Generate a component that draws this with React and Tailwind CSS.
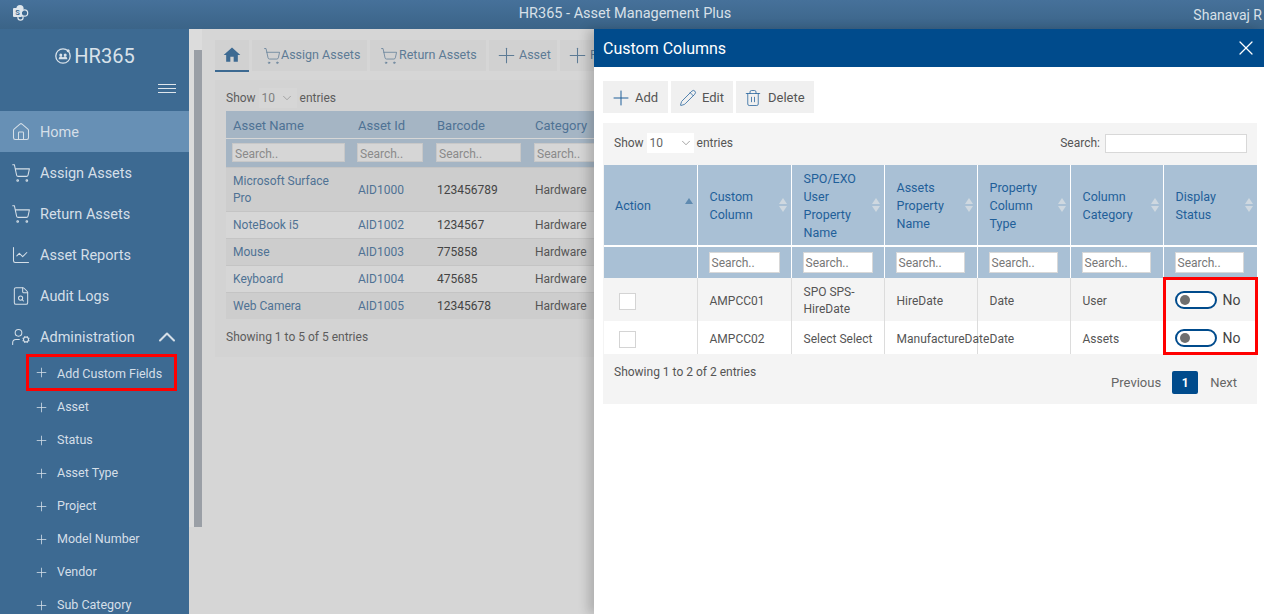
import React from 'react';
import { Home, ShoppingCart, ChartLine, FileSearch, UserCog, ChevronUp, ChevronDown, Plus, Pencil, Trash2, X } from 'lucide-react';
import { MdHome } from 'react-icons/md';

const mainMenu = [
  { label: 'Home', Icon: Home, active: true },
  { label: 'Assign Assets', Icon: ShoppingCart },
  { label: 'Return Assets', Icon: ShoppingCart },
  { label: 'Asset Reports', Icon: ChartLine },
  { label: 'Audit Logs', Icon: FileSearch },
];

const subMenu = ['Asset', 'Status', 'Asset Type', 'Project', 'Model Number', 'Vendor', 'Sub Category'];

const assets = [
  { name: 'Microsoft Surface Pro', id: 'AID1000', barcode: '123456789', h: 'h-[44px]' },
  { name: 'NoteBook i5', id: 'AID1002', barcode: '1234567', h: 'h-[27px]' },
  { name: 'Mouse', id: 'AID1003', barcode: '775858', h: 'h-[27px]' },
  { name: 'Keyboard', id: 'AID1004', barcode: '475685', h: 'h-[27px]' },
  { name: 'Web Camera', id: 'AID1005', barcode: '12345678', h: 'h-[27px]' },
];

const columns = [
  ['Custom', 'Column'],
  ['SPO/EXO', 'User', 'Property', 'Name'],
  ['Assets', 'Property', 'Name'],
  ['Property', 'Column', 'Type'],
  ['Column', 'Category'],
  ['Display', 'Status'],
];

const rows = [
  { code: 'AMPCC01', spo: ['SPO SPS-', 'HireDate'], prop: 'HireDate', type: 'Date', cat: 'User', bg: 'bg-[#f4f4f4]', h: 'h-[43px]' },
  { code: 'AMPCC02', spo: ['Select Select'], prop: 'ManufactureDate', type: 'Date', cat: 'Assets', bg: 'bg-white', h: 'h-[33px]' },
];

function SharePointLogo() {
  return (
    <svg width="17" height="17" viewBox="0 0 17 17" className="text-[#dfe6ec]">
      <circle cx="8" cy="4.5" r="3.6" fill="currentColor" />
      <circle cx="12.5" cy="9" r="3.2" fill="none" stroke="currentColor" strokeWidth="1.2" />
      <circle cx="8.5" cy="13.5" r="2.6" fill="none" stroke="currentColor" strokeWidth="1.2" />
      <rect x="1" y="4" width="9" height="9" rx="1" fill="currentColor" />
      <text x="5.5" y="11.4" fontSize="7.5" fontWeight="700" textAnchor="middle" fill="#3d6a92">S</text>
    </svg>
  );
}

function BrandMark() {
  return (
    <svg width="18" height="18" viewBox="0 0 18 18" className="text-[#d9e2ea]">
      <circle cx="9" cy="9" r="7.2" fill="none" stroke="currentColor" strokeWidth="1.3" />
      <circle cx="14.2" cy="3.8" r="1.5" fill="currentColor" />
      <circle cx="6.8" cy="8" r="1.5" fill="currentColor" />
      <circle cx="11.2" cy="8" r="1.5" fill="currentColor" />
      <path d="M4.6 12.2c.3-2 1.2-3 2.2-3s1.6.6 2.2 1.4c.6-.8 1.2-1.4 2.2-1.4s1.9 1 2.2 3z" fill="currentColor" />
    </svg>
  );
}

function SortArrows() {
  return (
    <span className="absolute right-[4px] top-1/2 -translate-y-1/2 flex flex-col gap-[2px]">
      <span className="w-0 h-0 border-x-[4px] border-x-transparent border-b-[6px] border-b-[#cfd8e0]" />
      <span className="w-0 h-0 border-x-[4px] border-x-transparent border-t-[6px] border-t-[#cfd8e0]" />
    </span>
  );
}

function Sidebar() {
  return (
    <aside className="w-[189px] shrink-0 bg-[#3d6a92] text-[#d5dfe8] overflow-hidden">
      <div className="flex items-center justify-center gap-[2px] h-[54px]">
        <BrandMark />
        <span className="text-[20px] text-[#d9e2ea] leading-none">HR365</span>
      </div>
      <div className="flex flex-col items-end gap-[3px] pr-[13px] h-[28px] pt-[1px]">
        <span className="w-[18px] h-px bg-[#dfe6ec]" />
        <span className="w-[18px] h-px bg-[#dfe6ec]" />
        <span className="w-[18px] h-px bg-[#dfe6ec]" />
      </div>
      {mainMenu.map(({ label, Icon, active }) => (
        <div key={label} className={`flex items-center h-[41px] pl-[11px] gap-[9px] text-[14.5px] ${active ? 'bg-[#6790b5]' : ''}`}>
          <Icon size={20} strokeWidth={1.25} />
          <span className="pt-[2px]">{label}</span>
        </div>
      ))}
      <div className="flex items-center h-[41px] pl-[11px] pr-[8px] gap-[9px] text-[14.5px]">
        <UserCog size={20} strokeWidth={1.25} />
        <span className="flex-1 pt-[2px]">Administration</span>
        <ChevronUp size={28} strokeWidth={1.75} />
      </div>
      <div className="mx-[26px] -mt-[3px] w-[151px] h-[37px] border-[3px] border-[#ff0000] flex items-center pl-[5px] gap-[8px] text-[12.5px]">
        <Plus size={15} strokeWidth={1.25} />
        <span className="pt-[3px]">Add Custom Fields</span>
      </div>
      {subMenu.map((item) => (
        <div key={item} className="flex items-center h-[33px] pl-[34px] gap-[8px] text-[12.5px]">
          <Plus size={15} strokeWidth={1.25} />
          <span>{item}</span>
        </div>
      ))}
    </aside>
  );
}

function BackgroundPage() {
  const tabs = [
    { label: 'Assign Assets', Icon: ShoppingCart, w: 'w-[115px]', size: 18, pad: 'pl-[11px] gap-0' },
    { label: 'Return Assets', Icon: ShoppingCart, w: 'w-[116px]', size: 18, pad: 'pl-[10px] gap-[1px]' },
    { label: 'Asset', Icon: Plus, w: 'w-[68px]', size: 25, pad: 'pl-[5px] gap-0' },
    { label: 'Project', Icon: Plus, w: 'w-[90px]', size: 25, pad: 'pl-[5px] gap-0' },
  ];
  return (
    <main className="flex-1 flex bg-[#d6d6d6] overflow-hidden min-w-0 mr-[670px]">
      <div className="w-[13px] shrink-0 h-[498px] bg-[#dcdcdc] pl-[5px] pt-[21px] -mb-px">
        <div className="w-[8px] h-[477px] bg-[#9a9fa6]" />
      </div>
      <div className="pl-[13px] pt-[11px] shrink-0">
        <div className="flex gap-[3px] h-[31px]">
          <div className="w-[34px] h-[32px] shrink-0 bg-[#d1d1d1] border-b-2 border-[#3d6a92] flex items-center justify-center text-[#3d6a92]">
            <MdHome size={20} />
          </div>
          {tabs.map(({ label, Icon, w, size, pad }) => (
            <div key={label} className={`${w} ${pad} shrink-0 bg-[#d1d1d1] flex items-center text-[12.5px] text-[#5d7b95]`}>
              <Icon size={size} strokeWidth={1} />
              <span>{label}</span>
            </div>
          ))}
        </div>
        <div className="mt-[9px] w-[600px] h-[277px] bg-[#d3d3d3] pl-[11px] text-[12px] text-[#5c5c5c]">
          <div className="flex items-center h-[31px] gap-[3px] pt-[5px]">
            <span>Show</span>
            <span className="w-[38px] h-[20px] bg-[#d6d6d6] flex items-center justify-between px-[3px] text-[#7f7f7f]">10<ChevronDown size={14} strokeWidth={1} /></span>
            <span>entries</span>
          </div>
          <table className="table-fixed w-[560px] border-collapse">
            <colgroup>
              <col className="w-[125px]" />
              <col className="w-[79px]" />
              <col className="w-[98px]" />
              <col className="w-[258px]" />
            </colgroup>
            <thead>
              <tr className="h-[27px] bg-[#a5b5c4] text-[#4f7294] text-[13px] text-left">
                <th className="font-normal pl-[7px] pt-[2px]">Asset Name</th>
                <th className="font-normal pl-[7px] pt-[2px]">Asset Id</th>
                <th className="font-normal pl-[7px] pt-[2px]">Barcode</th>
                <th className="font-normal pl-[7px] pt-[2px]">Category</th>
              </tr>
              <tr className="h-[29px] bg-[#a5b5c4] border-t border-[#d6d6d6]">
                {['w-[113px]', 'w-[66px]', 'w-[85px]', 'w-[85px]'].map((w, i) => (
                  <th key={i} className="font-normal text-left pl-[6px]">
                    <div className={`${w} h-[19px] bg-[#d6d6d6] border border-[#c8c8c8] text-[#8a8a8a] text-[12px] leading-[20px] pl-[2px]`}>Search..</div>
                  </th>
                ))}
              </tr>
            </thead>
            <tbody>
              {assets.map((a, i) => (
                <tr key={a.id} className={`${a.h} ${i % 2 === 0 ? 'bg-[#cdcdcd]' : 'bg-[#d6d6d6]'} border-t border-[#c4c4c4]`}>
                  <td className="pl-[7px] pr-[6px] pt-px leading-[17px] text-[#4f7294]">{a.name}</td>
                  <td className="pl-[7px] pt-px text-[#4f7294]">{a.id}</td>
                  <td className="pl-[7px] pt-px text-[#444]">{a.barcode}</td>
                  <td className="pl-[7px] pt-px text-[#555]">Hardware</td>
                </tr>
              ))}
            </tbody>
          </table>
          <div className="pt-[9px]">Showing 1 to 5 of 5 entries</div>
        </div>
      </div>
    </main>
  );
}

function Toggle() {
  return (
    <div className="flex items-center gap-[6px] text-[14px] text-[#444]">
      <span className="w-[42px] h-[18px] rounded-full border-2 border-[#004b8c] bg-white flex items-center pl-[3px]">
        <span className="w-[10px] h-[10px] rounded-full bg-[#6f6f6f]" />
      </span>
      <span className="pt-px">No</span>
    </div>
  );
}

function CustomColumnsPanel() {
  const filterWidths = ['w-[71px]', 'w-[70px]', 'w-[69px]', 'w-[69px]', 'w-[69px]', 'w-[69px]'];
  return (
    <section className="absolute top-[29px] right-0 bottom-0 w-[670px] bg-white shadow-[-6px_0_10px_rgba(0,0,0,0.18)]">
      <header className="h-[38px] bg-[#004b8c] text-white flex items-center justify-between pl-[9px] pr-[6px]">
        <h2 className="text-[16px] pt-px">Custom Columns</h2>
        <X size={24} strokeWidth={1.25} />
      </header>
      <div className="flex gap-[3px] pl-[9px] pt-[14px] text-[13px] text-[#555]">
        <button className="w-[65px] h-[32px] bg-[#f0f0f0] flex items-center pl-[6px] gap-[2px] pt-px">
          <Plus size={24} strokeWidth={1} className="text-[#1f5f99]" />Add
        </button>
        <button className="w-[62px] h-[32px] bg-[#f0f0f0] flex items-center pl-[8px] gap-[5px] pt-px">
          <Pencil size={18} strokeWidth={1} className="text-[#1f5f99]" />Edit
        </button>
        <button className="w-[78px] h-[32px] bg-[#f0f0f0] flex items-center pl-[8px] gap-[6px] pt-px">
          <Trash2 size={18} strokeWidth={1} className="text-[#1f5f99]" />Delete
        </button>
      </div>
      <div className="mt-[10px] ml-[9px] w-[654px] h-[281px] bg-[#f4f4f4] text-[12px] text-[#555]">
        <div className="flex items-center justify-between h-[42px] pl-[11px] pr-[10px] pb-[2px]">
          <div className="flex items-center gap-[3px]">
            <span>Show</span>
            <span className="w-[47px] h-[20px] bg-white flex items-center justify-between pl-[3px] pr-[1px] text-[#666]">10<ChevronDown size={14} strokeWidth={1} /></span>
            <span>entries</span>
          </div>
          <div className="flex items-center gap-[5px]">
            <span>Search:</span>
            <span className="w-[142px] h-[19px] bg-white border border-[#d8d8d8]" />
          </div>
        </div>
        <table className="table-fixed ml-px w-[653px] border-collapse">
          <colgroup>
            <col className="w-[93px]" />
            <col className="w-[94px]" />
            <col className="w-[93px]" />
            <col className="w-[93px]" />
            <col className="w-[93px]" />
            <col className="w-[93px]" />
            <col className="w-[94px]" />
          </colgroup>
          <thead>
            <tr className="h-[81px] bg-[#a9c0d5] text-[#1f5f99] text-[12.5px] leading-[18px] text-left">
              <th className="relative font-normal pl-[11px] border-r border-white pt-px">
                Action
                <span className="absolute right-[4px] top-[33px] w-0 h-0 border-x-[4px] border-x-transparent border-b-[6px] border-b-[#5f8ab0]" />
              </th>
              {columns.map((lines, i) => (
                <th key={i} className={`relative font-normal pl-[12px] pt-px ${i < 5 ? 'border-r border-white' : ''}`}>
                  {lines.map((l) => <div key={l}>{l}</div>)}
                  <SortArrows />
                </th>
              ))}
            </tr>
            <tr className="h-[32px] bg-[#a9c0d5] border-t-2 border-white">
              <th className="border-r border-white" />
              {filterWidths.map((w, i) => (
                <th key={i} className={`font-normal text-left pl-[11px] ${i < 5 ? 'border-r border-white' : ''}`}>
                  <div className={`${w} h-[21px] bg-white border border-[#d8d8d8] text-[#777] text-[12px] leading-[20px] pl-[2px]`}>Search..</div>
                </th>
              ))}
            </tr>
          </thead>
          <tbody>
            {rows.map((r) => (
              <tr key={r.code} className={`${r.h} ${r.bg} leading-[17px]`}>
                <td className="pl-[15px] pt-[3px] border-r border-[#dcdcdc]">
                  <span className="block w-[17px] h-[17px] bg-white border border-[#d4d4d4]" />
                </td>
                <td className="pl-[12px] pt-[3px] border-r border-[#dcdcdc]">{r.code}</td>
                <td className="pl-[12px] pt-[3px] border-r border-[#dcdcdc]">{r.spo.map((l) => <div key={l}>{l}</div>)}</td>
                <td className="pl-[12px] pt-[3px] border-r border-[#dcdcdc] whitespace-nowrap">{r.prop}</td>
                <td className="pl-[12px] pt-[3px] border-r border-[#dcdcdc]">{r.type}</td>
                <td className="pl-[12px] pt-[3px] border-r border-[#dcdcdc]">{r.cat}</td>
                <td className="pl-[11px]"><Toggle /></td>
              </tr>
            ))}
          </tbody>
        </table>
        <div className="flex justify-between pl-[11px] pr-[20px] pt-[9px]">
          <span>Showing 1 to 2 of 2 entries</span>
          <div className="flex items-center mt-[8px] text-[13px] text-[#666]">
            <span>Previous</span>
            <span className="ml-[11px] mr-[12px] w-[26px] h-[23px] rounded-[2px] bg-[#004b8c] text-white font-bold text-[12px] flex items-center justify-center">1</span>
            <span>Next</span>
          </div>
        </div>
        <div className="absolute left-[569px] top-[248px] w-[95px] h-[78px] border-[3px] border-[#ff0000]" />
      </div>
    </section>
  );
}

export default function App() {
  return (
    <div className="relative h-screen overflow-hidden flex flex-col font-['Roboto','Open_Sans',sans-serif]">
      <div className="relative h-[29px] shrink-0 bg-gradient-to-b from-[#46719a] to-[#3b6488] flex items-center justify-center pr-[14px] pb-px text-[#d8e0e8] text-[14.5px]">
        <span className="absolute left-[12px] top-[4px]"><SharePointLogo /></span>
        <span>HR365 - Asset Management Plus</span>
        <span className="absolute right-[2px] top-[5px] text-[14px]">Shanavaj R</span>
      </div>
      <div className="flex-1 flex min-h-0">
        <Sidebar />
        <BackgroundPage />
      </div>
      <CustomColumnsPanel />
    </div>
  );
}
